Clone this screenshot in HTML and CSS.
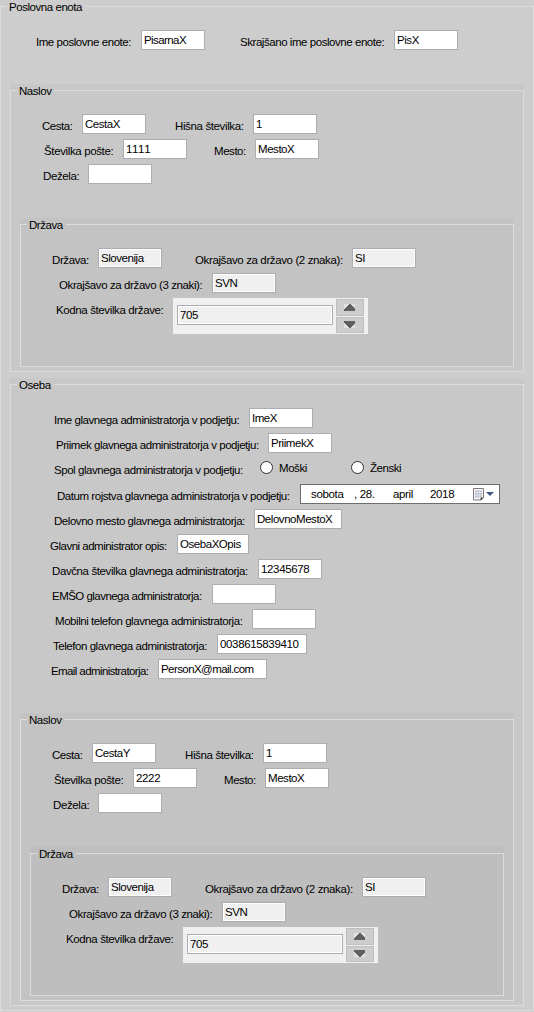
FILE: index.html
```
<!DOCTYPE html>
<html lang="sl">
<head>
<meta charset="utf-8">
<title>Poslovna enota</title>
<link rel="stylesheet" href="styles.css">
</head>
<body>
<section class="group unit">
  <h2 class="legend">Poslovna enota</h2>
  <div class="rows">
    <div class="row">
      <span class="label unit-name">Ime poslovne enote:</span><span class="input tight">PisarnaX</span>
      <span class="label unit-short">Skrajšano ime poslovne enote:</span><span class="input">PisX</span>
    </div>
  </div>

  <section class="group level-1">
    <h2 class="legend">Naslov</h2>
    <div class="rows">
      <div class="row">
        <span class="label street">Cesta:</span><span class="input">CestaX</span>
        <span class="label house">Hišna številka:</span><span class="input">1</span>
      </div>
      <div class="row">
        <span class="label post">Številka pošte:</span><span class="input number">1111</span>
        <span class="label city">Mesto:</span><span class="input">MestoX</span>
      </div>
      <div class="row"><span class="label region">Dežela:</span><span class="input"></span></div>
    </div>
    <section class="group level-2">
      <h2 class="legend">Država</h2>
      <div class="rows">
        <div class="row">
          <span class="label country">Država:</span><span class="input readonly">Slovenija</span>
          <span class="label code-2">Okrajšavo za državo (2 znaka):</span><span class="input readonly">SI</span>
        </div>
        <div class="row"><span class="label code-3">Okrajšavo za državo (3 znaki):</span><span class="input readonly">SVN</span></div>
        <div class="row">
          <span class="label code-num">Kodna številka države:</span>
          <div class="spinner">
            <span class="input readonly number">705</span>
            <div class="buttons">
              <span class="button up"><svg width="11" height="7" shape-rendering="crispEdges"><path d="M5 0h1l5 5v2H0V5z"/></svg></span>
              <span class="button down"><svg width="11" height="7" shape-rendering="crispEdges"><path d="M0 0h11v2L6 7H5L0 2z"/></svg></span>
            </div>
          </div>
        </div>
      </div>
    </section>
  </section>

  <section class="group level-1">
    <h2 class="legend">Oseba</h2>
    <div class="rows">
      <div class="row"><span class="label first-name">Ime glavnega administratorja v podjetju:</span><span class="input">ImeX</span></div>
      <div class="row"><span class="label last-name">Priimek glavnega administratorja v podjetju:</span><span class="input">PriimekX</span></div>
      <div class="row">
        <span class="label gender">Spol glavnega administratorja v podjetju:</span>
        <span class="option male"><i class="radio"></i>Moški</span>
        <span class="option"><i class="radio"></i>Ženski</span>
      </div>
      <div class="row date-row">
        <span class="label birth">Datum rojstva glavnega administratorja v podjetju:</span>
        <div class="date">
          <span class="weekday">sobota</span><span class="day">, 28.</span><span class="month">april</span><span class="year">2018</span>
          <svg class="calendar" width="22" height="13" viewBox="0 0 22 13">
            <path d="M1.5.5h10v9l-2.5 2.5H1.5z" fill="#f6f6fb" stroke="#81767a"/>
            <path d="M8.5 12.5v-3H12z" fill="#4b3e49"/>
            <path d="M3 2.5h7v7H3z" fill="#b4bccb"/>
            <path d="M3 4.5h7M3 7h7M5.2 2.5v7M7.8 2.5v7" stroke="#eceef5" stroke-width=".7"/>
            <path d="M14 4h8l-4 4z" fill="#405684"/>
          </svg>
        </div>
      </div>
      <div class="row"><span class="label job">Delovno mesto glavnega administratorja:</span><span class="input w-job">DelovnoMestoX</span></div>
      <div class="row"><span class="label about">Glavni administrator opis:</span><span class="input w-about">OsebaXOpis</span></div>
      <div class="row"><span class="label tax">Davčna številka glavnega administratorja:</span><span class="input number">12345678</span></div>
      <div class="row"><span class="label emso">EMŠO glavnega administratorja:</span><span class="input"></span></div>
      <div class="row"><span class="label mobile">Mobilni telefon glavnega administratorja:</span><span class="input"></span></div>
      <div class="row"><span class="label phone">Telefon glavnega administratorja:</span><span class="input number w-phone">0038615839410</span></div>
      <div class="row"><span class="label email">Email administratorja:</span><span class="input tight w-email">PersonX@mail.com</span></div>
    </div>

    <section class="group level-2">
      <h2 class="legend">Naslov</h2>
      <div class="rows">
        <div class="row">
          <span class="label street">Cesta:</span><span class="input">CestaY</span>
          <span class="label house">Hišna številka:</span><span class="input">1</span>
        </div>
        <div class="row">
          <span class="label post">Številka pošte:</span><span class="input number">2222</span>
          <span class="label city">Mesto:</span><span class="input">MestoX</span>
        </div>
        <div class="row"><span class="label region">Dežela:</span><span class="input"></span></div>
      </div>
      <section class="group level-3">
        <h2 class="legend">Država</h2>
        <div class="rows">
          <div class="row">
            <span class="label country">Država:</span><span class="input readonly">Slovenija</span>
            <span class="label code-2">Okrajšavo za državo (2 znaka):</span><span class="input readonly">SI</span>
          </div>
          <div class="row"><span class="label code-3">Okrajšavo za državo (3 znaki):</span><span class="input readonly">SVN</span></div>
          <div class="row">
            <span class="label code-num">Kodna številka države:</span>
            <div class="spinner">
              <span class="input readonly number">705</span>
              <div class="buttons">
                <span class="button up"><svg width="11" height="7" shape-rendering="crispEdges"><path d="M5 0h1l5 5v2H0V5z"/></svg></span>
                <span class="button down"><svg width="11" height="7" shape-rendering="crispEdges"><path d="M0 0h11v2L6 7H5L0 2z"/></svg></span>
              </div>
            </div>
          </div>
        </div>
      </section>
    </section>
  </section>
</section>
</body>
</html>
```
FILE: styles.css
```
* { box-sizing: border-box; }
body {
  margin: 0;
  height: 1012px;
  overflow: hidden;
  background: #cdcdcd;
  color: #000;
  font: 11.5px/14px "Liberation Sans", Arial, sans-serif;
  letter-spacing: -0.45px;
  white-space: nowrap;
}

/* Group boxes: the frame line runs 6px below the top of the background */
.group { position: relative; background: var(--bg); padding-bottom: 5px; }
.group::before {
  content: "";
  position: absolute;
  inset: 6px 0 0;
  border: 1px solid #dcdcdc;
  pointer-events: none;
}
.group .group { margin: 0 10px; }
.group .group + .group { margin-top: 6px; }
.unit { --bg: #cdcdcd; }
.level-1 { --bg: #c8c8c8; }
.level-2 { --bg: #c3c3c3; }
.level-3 { --bg: #bebebe; }
.legend {
  position: relative;
  width: max-content;
  height: 14px;
  margin: 0 0 0 7px;
  padding: 0 3px 0 2px;
  background: var(--bg);
  font: inherit;
}
.rows { display: flex; flex-direction: column; gap: 5px; padding: 16px 0 34px; }
.rows:last-child { padding-bottom: 28px; }
.row { display: flex; align-items: flex-start; height: 20px; }
.row:has(.spinner) { height: 36px; }

.label { flex: none; padding-top: 5px; }
.input {
  flex: none;
  width: 64px;
  height: 20px;
  padding: 2px 0 0 2px;
  border: 1px solid #abadb3;
  background: #fff;
}
.readonly { background: #f0f0f0; box-shadow: inset 0 0 0 1px #fff; }
.number { letter-spacing: -0.35px; font-kerning: none; }
.tight { letter-spacing: -0.58px; }
.w-job { width: 88px; }
.w-about { width: 72px; }
.w-phone { width: 90px; }
.w-email { width: 109px; }

.unit-name { margin-left: 36px; width: 105px; }
.unit-short { margin-left: 35px; width: 154px; }
.street { margin-left: 32px; width: 40px; }
.house { margin-left: 29px; width: 78px; letter-spacing: -0.37px; }
.post { margin-left: 34px; width: 79px; letter-spacing: -0.37px; }
.city { margin-left: 27px; width: 41px; }
.region { margin-left: 33px; width: 45px; letter-spacing: -0.4px; }
.country { margin-left: 32px; width: 46px; letter-spacing: -0.4px; }
.code-2 { margin-left: 33px; width: 157px; letter-spacing: -0.38px; }
.code-3 { margin-left: 39px; width: 153px; letter-spacing: -0.4px; }
.code-num { margin-left: 36px; width: 117px; letter-spacing: -0.38px; }
.first-name { margin-left: 44px; width: 195px; }
.last-name { margin-left: 46px; width: 212px; }
.gender { margin-left: 44px; width: 206px; }
.birth { margin-left: 47px; width: 243px; }
.job { margin-left: 44px; width: 200px; }
.about { margin-left: 40px; width: 127px; letter-spacing: -0.5px; }
.tax { margin-left: 42px; width: 206px; letter-spacing: -0.4px; }
.emso { margin-left: 42px; width: 160px; letter-spacing: -0.53px; }
.mobile { margin-left: 45px; width: 197px; }
.phone { margin-left: 43px; width: 164px; }
.email { margin-left: 41px; width: 107px; letter-spacing: -0.6px; }

/* Number field with up/down buttons */
.spinner { display: flex; width: 195px; height: 36px; padding: 1px 4px; background: #f0f0f0; }
.spinner .input { width: 156px; margin: 6px 3px 0 0; }
.buttons { display: flex; flex-direction: column; gap: 1px; }
.button {
  display: flex;
  justify-content: center;
  width: 28px;
  height: 17px;
  padding: 4px 1px 0 0;
  border: 1px solid #bfbfbf;
  background: #cdcdcd;
}
.down { height: 16px; padding-top: 3px; }
.button svg { background: #e1e1e1; fill: #606060; }

.option { display: flex; align-items: flex-start; padding-top: 3px; }
.male { width: 91px; }
.radio {
  width: 13px;
  height: 13px;
  margin-right: 6px;
  border: 1px solid #333;
  border-radius: 50%;
  background: #fff;
}

.date-row { height: 21px; padding-top: 1px; }
.date {
  display: flex;
  width: 200px;
  height: 20px;
  padding: 3px 0 0 10px;
  border: 1px solid #6d6d6d;
  background: #fff;
}
.date span { margin-top: -1px; letter-spacing: -0.35px; }
.weekday { width: 43px; }
.day { width: 39px; }
.month { width: 37px; }
.year { width: 42px; }
```
